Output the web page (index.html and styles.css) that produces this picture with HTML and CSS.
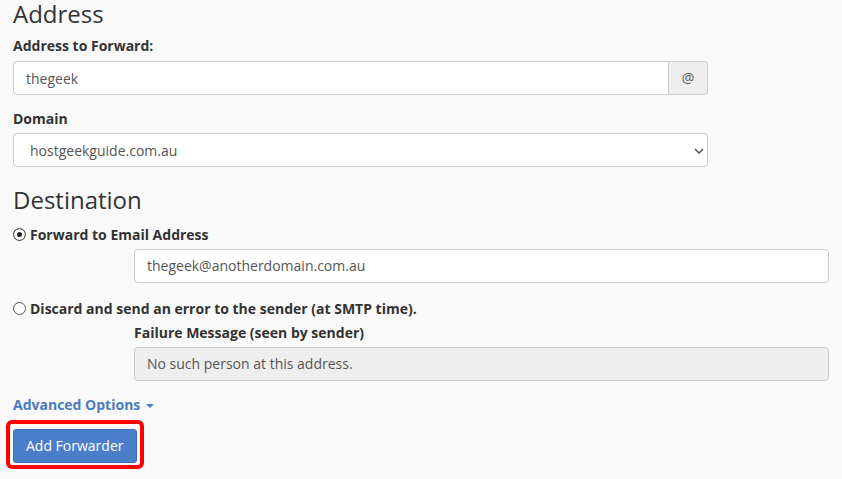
FILE: index.html
```html
<!DOCTYPE html>
<html lang="en">
<head>
    <meta charset="UTF-8">
    <meta name="viewport" content="width=device-width, initial-scale=1.0">
    <title>Add Email Forwarder</title>
    <link rel="stylesheet" href="styles.css">
</head>
<body>
    <form class="forwarder-form">
        <h2>Address</h2>
        <div class="form-group">
            <label for="email">Address to Forward:</label>
            <div class="input-group">
                <input type="text" id="email" value="thegeek">
                <span class="input-addon">@</span>
            </div>
        </div>
        <div class="form-group domain-group">
            <label for="domain">Domain</label>
            <div class="select-wrap">
                <select id="domain">
                    <option>hostgeekguide.com.au</option>
                </select>
                <svg class="select-arrow" width="10" height="6" viewBox="0 0 10 6">
                    <path d="M1 1l4 4 4-4" fill="none" stroke="#555" stroke-width="1.5"/>
                </svg>
            </div>
        </div>

        <h2 class="dest-title">Destination</h2>
        <div class="radio-row">
            <label><input type="radio" name="action" checked> Forward to Email Address</label>
        </div>
        <div class="sub-field">
            <input type="text" value="thegeek@anotherdomain.com.au">
        </div>

        <div class="radio-row discard">
            <label><input type="radio" name="action"> Discard and send an error to the sender (at SMTP time).</label>
        </div>
        <div class="sub-field">
            <label for="failmsg">Failure Message (seen by sender)</label>
            <input type="text" id="failmsg" value="No such person at this address." disabled>
        </div>

        <div class="advanced-row">
            <a class="advanced" href="#">Advanced Options <span class="caret"></span></a>
        </div>

        <div class="highlight">
            <button type="submit">Add Forwarder</button>
        </div>
    </form>
</body>
</html>
```

FILE: styles.css
```css
body {
    margin: 0;
    font-family: "Open Sans", Arial, sans-serif;
    font-size: 14px;
    line-height: 20px;
    color: #333;
    background-color: #f9f9f9;
}
.forwarder-form {
    padding: 1px 0 0 13px;
}
h2 {
    font-size: 24px;
    font-weight: 400;
    line-height: 1.1;
    margin: 0 0 9px;
}
label {
    display: block;
    font-weight: 700;
    margin-bottom: 5px;
}
.form-group {
    width: 695px;
    margin-bottom: 14px;
}
.domain-group label {
    margin-bottom: 4px;
}
input[type="text"], select {
    width: 100%;
    height: 34px;
    padding: 6px 12px;
    font-family: inherit;
    font-size: 14px;
    color: #555;
    background-color: #fff;
    border: 1px solid #ccc;
    border-radius: 4px;
    box-sizing: border-box;
}
input[disabled] {
    background-color: #eee;
}
.input-group {
    display: flex;
}
.input-group input {
    border-radius: 4px 0 0 4px;
}
.input-addon {
    flex: 0 0 39px;
    display: flex;
    align-items: center;
    justify-content: center;
    height: 34px;
    box-sizing: border-box;
    color: #555;
    background-color: #eee;
    border: 1px solid #ccc;
    border-left: none;
    border-radius: 0 4px 4px 0;
}
.select-wrap {
    position: relative;
}
select {
    appearance: none;
    padding-left: 16px;
}
.select-arrow {
    position: absolute;
    right: 4px;
    top: 15px;
}
.dest-title {
    margin-top: 20px;
    margin-bottom: 11px;
}
.radio-row label {
    display: flex;
    align-items: center;
    gap: 4px;
    margin-bottom: 4px;
}
.radio-row input {
    appearance: none;
    margin: 0;
    width: 13px;
    height: 13px;
    border: 1px solid #555;
    border-radius: 50%;
    background-color: #fff;
    box-sizing: border-box;
}
.radio-row input:checked {
    background-color: #222;
    box-shadow: inset 0 0 0 3px #fff;
}
.radio-row.discard {
    margin-top: 16px;
}
.sub-field {
    margin-left: 121px;
    width: 695px;
}
.sub-field label {
    margin-bottom: 4px;
}
.advanced-row {
    margin-top: 14px;
}
.advanced {
    font-weight: 700;
    color: #4a7bc2;
    text-decoration: none;
}
.caret {
    display: inline-block;
    width: 0;
    height: 0;
    margin-left: 2px;
    vertical-align: middle;
    border-top: 4px solid #4a7bc2;
    border-left: 4px solid transparent;
    border-right: 4px solid transparent;
}
.highlight {
    width: fit-content;
    margin: 5px 0 0 -7px;
    padding: 5px 3px 2px 3px;
    border: 4px solid #f00;
    border-radius: 6px;
}
.highlight button {
    display: block;
    height: 34px;
    padding: 6px 12px;
    font-family: inherit;
    font-size: 14px;
    color: #fff;
    background-color: #4a7ec9;
    border: 1px solid #3d6db5;
    border-radius: 3px;
    cursor: pointer;
}
```
